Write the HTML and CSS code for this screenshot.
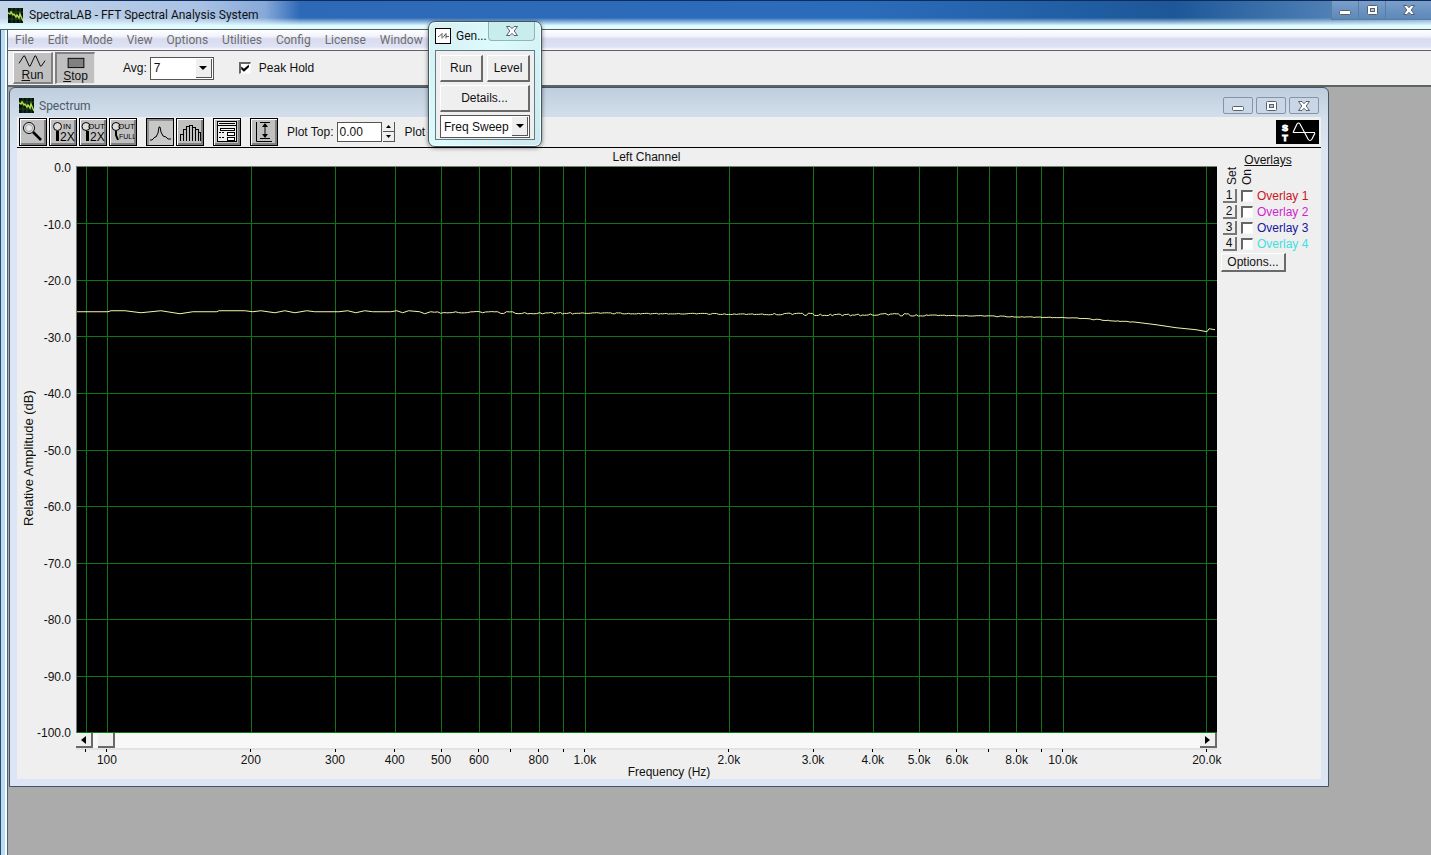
FILE: index.html
```
<!DOCTYPE html>
<html lang="en">
<head>
  <meta charset="UTF-8" />
  <meta name="viewport" content="width=device-width, initial-scale=1.0" />
  <title>SpectraLAB - FFT Spectral Analysis System</title>
  <link rel="stylesheet" href="styles.css">
</head>
<body>
  <svg class="defs" aria-hidden="true">
    <symbol id="app-icon" viewBox="0 0 15 15">
      <rect width="15" height="15" fill="#07140a"/>
      <path d="M4 0V15M8 0V15M12 0V15M0 4H15M0 11H15" stroke="#1c4a20" stroke-width="1"/>
      <path d="M0 5L2 6L3 4L5 7L6 6L8 9L9 7L11 10L12 6L15 13" fill="none" stroke="#b9d94a" stroke-width="1.4"/>
    </symbol>
    <symbol id="win-min" viewBox="0 0 14 12">
      <rect x="1.5" y="6.5" width="11" height="4" rx="1" fill="#fff" stroke="#56616f"/>
    </symbol>
    <symbol id="win-max" viewBox="0 0 14 12">
      <rect x="2.5" y="1.5" width="10" height="9" rx="1" fill="#fff" stroke="#56616f"/>
      <rect x="5.5" y="4.5" width="4" height="3" fill="#b8c6d6" stroke="#56616f"/>
    </symbol>
    <symbol id="win-close" viewBox="0 0 14 12">
      <path d="M1.5 1.5H5L7 3.7L9 1.5H12.5L9.2 6L12.5 10.5H9L7 8.3L5 10.5H1.5L4.8 6Z" fill="#fff" stroke="#56616f"/>
    </symbol>
    <symbol id="arrow-down" viewBox="0 0 8 4"><path d="M0 0H8L4 4Z"/></symbol>
  </svg>

  <div class="app">
    <header class="titlebar">
      <svg class="app-icon"><use href="#app-icon"/></svg>
      <h1 class="title">SpectraLAB - FFT Spectral Analysis System</h1>
      <div class="win-buttons">
        <button aria-label="Minimize"><svg><use href="#win-min"/></svg></button>
        <button aria-label="Maximize"><svg><use href="#win-max"/></svg></button>
        <button class="close" aria-label="Close"><svg><use href="#win-close"/></svg></button>
      </div>
    </header>

    <div class="frame">
      <nav class="menubar">
        <a href="#">File</a>
        <a href="#">Edit</a>
        <a href="#">Mode</a>
        <a href="#">View</a>
        <a href="#">Options</a>
        <a href="#">Utilities</a>
        <a href="#">Config</a>
        <a href="#">License</a>
        <a href="#">Window</a>
      </nav>

      <div class="toolbar">
        <button class="run-btn">
          <svg width="30" height="14" viewBox="0 0 30 14"><path d="M0 9L5 1L6 1L11 12L12 12L17 1L18 1L23 12L24 12L28 6" fill="none" stroke="#000"/></svg>
          <span><u>R</u>un</span>
        </button>
        <button class="run-btn pressed">
          <svg width="30" height="14" viewBox="0 0 30 14"><rect x="6.5" y="2.5" width="17" height="10" fill="#808080" stroke="#000"/></svg>
          <span><u>S</u>top</span>
        </button>
        <label class="avg-label" for="avg">Avg:</label>
        <div class="combo avg">
          <select id="avg"><option>7</option><option>8</option></select>
          <span class="drop"><svg width="8" height="4"><use href="#arrow-down"/></svg></span>
        </div>
        <label class="peak"><input type="checkbox" class="check" checked> Peak Hold</label>
      </div>

      <main class="mdi">
        <section class="child">
          <div class="child-title">
            <svg class="app-icon"><use href="#app-icon"/></svg>
            <h2 class="title">Spectrum</h2>
            <div class="child-buttons">
              <button aria-label="Minimize"><svg><use href="#win-min"/></svg></button>
              <button aria-label="Maximize"><svg><use href="#win-max"/></svg></button>
              <button aria-label="Close"><svg><use href="#win-close"/></svg></button>
            </div>
          </div>

          <div class="child-body">
            <div class="plot-tools">
              <div class="tool-group">
                <button class="tool" aria-label="Zoom">
                  <svg viewBox="0 0 24 24"><circle cx="8" cy="8" r="5.5" fill="#e8e8e8" stroke="#000"/><circle cx="8" cy="8" r="3.5" fill="none" stroke="#999"/><path d="M12 12L20 20" stroke="#000" stroke-width="2.5"/></svg>
                </button>
                <button class="tool" aria-label="Zoom in 2X">
                  <svg viewBox="0 0 24 24"><circle cx="6.5" cy="6.5" r="4" fill="#ddd" stroke="#000"/><path d="M6.5 11V21" stroke="#000" stroke-width="3"/><text x="12" y="9" class="s8">IN</text><text x="9" y="21" class="s12">2X</text></svg>
                </button>
                <button class="tool" aria-label="Zoom out 2X">
                  <svg viewBox="0 0 24 24"><circle cx="5" cy="6.5" r="4" fill="#ddd" stroke="#000"/><path d="M6.5 11V21" stroke="#000" stroke-width="3"/><text x="7" y="9" class="s8">OUT</text><text x="9" y="21" class="s12">2X</text></svg>
                </button>
                <button class="tool" aria-label="Zoom out full">
                  <svg viewBox="0 0 24 24"><circle cx="5" cy="6.5" r="4" fill="#ddd" stroke="#000"/><path d="M5 11V15L7 20" fill="none" stroke="#000" stroke-width="2"/><text x="7" y="9" class="s8">OUT</text><text x="8" y="19" class="s7">FULL</text></svg>
                </button>
              </div>
              <div class="tool-group">
                <button class="tool pressed" aria-label="Line plot">
                  <svg viewBox="0 0 24 24"><path d="M2 20H4L7 17H8L10 13L11 7L12 7L13 12L15 16L18 17L20 19H23" fill="none" stroke="#000"/></svg>
                </button>
                <button class="tool" aria-label="Bar plot">
                  <svg viewBox="0 0 24 24" shape-rendering="crispEdges"><path d="M2.5 21V14.5H5.5V21M5.5 14V9.5H8.5V21M8.5 9V6.5H11.5V21M11.5 5.5H14.5V21M14.5 7.5H17.5V21M17.5 9.5H20.5V21M20.5 12.5H22.5V21M11.5 9V5" fill="none" stroke="#000"/></svg>
                </button>
              </div>
              <div class="tool-group">
                <button class="tool" aria-label="Display settings">
                  <svg viewBox="0 0 24 24" shape-rendering="crispEdges"><rect x="2.5" y="1.5" width="19" height="20" fill="#eee" stroke="#000"/><path d="M4 3.5H20M3 5.5H21" stroke="#000"/><path d="M4 12.5H10M4 17.5H10" stroke="#000" stroke-dasharray="2 1"/><rect x="5.5" y="8.5" width="14" height="2" fill="#fff" stroke="#000"/><rect x="12.5" y="12.5" width="7" height="3" fill="#fff" stroke="#000"/><rect x="12.5" y="17.5" width="7" height="3" fill="#fff" stroke="#000"/></svg>
                </button>
              </div>
              <div class="tool-group">
                <button class="tool" aria-label="Autoscale">
                  <svg viewBox="0 0 24 24"><path d="M4.5 2V21.5H20M8 2.5H18M8 18.5H18M13 5V16" fill="none" stroke="#000"/><path d="M10 7H16L13 3ZM10 14H16L13 18Z"/></svg>
                </button>
              </div>
              <label for="plot-top">Plot Top:</label>
              <input id="plot-top" class="num" type="text" value="0.00">
              <div class="spin">
                <button aria-label="Up"><svg width="5" height="3" viewBox="0 0 5 3"><path d="M0 3H5L2.5 0Z"/></svg></button>
                <button aria-label="Down"><svg width="5" height="3" viewBox="0 0 5 3"><path d="M0 0H5L2.5 3Z"/></svg></button>
              </div>
              <span class="plot-more">Plot</span>
              <svg class="logo" width="43" height="24" viewBox="0 0 43 24">
                <rect width="43" height="24"/>
                <text x="9" y="11" class="logo-text">S</text>
                <text x="9" y="21" class="logo-text">T</text>
                <path d="M17 12.5H39M17 12.5L21 4Q22.5 2 24 4L32 19Q34 22 36 19L39 13" fill="none" stroke="#fff" stroke-width="1.2"/>
              </svg>
            </div>

            <div class="plot-area">
              <div class="y-title">Relative Amplitude (dB)</div>
              <div class="y-axis">
                <span>0.0</span><span>-10.0</span><span>-20.0</span><span>-30.0</span><span>-40.0</span><span>-50.0</span><span>-60.0</span><span>-70.0</span><span>-80.0</span><span>-90.0</span><span>-100.0</span>
              </div>
              <div class="plot-column">
                <h3 class="channel">Left Channel</h3>
                <svg id="plot" class="plot">
                  <g id="grid"></g>
                  <svg width="100%" height="100%" viewBox="0 0 1141 567" preserveAspectRatio="none"><polyline id="trace" class="trace"/></svg>
                </svg>
                <div class="scrollbar">
                  <button aria-label="Scroll left"><svg width="5" height="8" viewBox="0 0 5 8"><path d="M5 0V8L0 4Z"/></svg></button>
                  <span class="thumb"></span>
                  <button class="right" aria-label="Scroll right"><svg width="5" height="8" viewBox="0 0 5 8"><path d="M0 0V8L5 4Z"/></svg></button>
                </div>
                <svg id="x-axis" class="x-axis"></svg>
              </div>
              <aside class="overlays">
                <h3>Overlays</h3>
                <div class="heads"><span>Set</span><span>On</span></div>
                <div class="overlay o1"><button>1</button><input type="checkbox" class="check" id="o1"><label for="o1">Overlay 1</label></div>
                <div class="overlay o2"><button>2</button><input type="checkbox" class="check" id="o2"><label for="o2">Overlay 2</label></div>
                <div class="overlay o3"><button>3</button><input type="checkbox" class="check" id="o3"><label for="o3">Overlay 3</label></div>
                <div class="overlay o4"><button>4</button><input type="checkbox" class="check" id="o4"><label for="o4">Overlay 4</label></div>
                <button class="raised options">Options...</button>
              </aside>
            </div>
            <div class="x-title">Frequency (Hz)</div>
          </div>
        </section>
      </main>
    </div>
  </div>

  <div class="generator" role="dialog" aria-label="Generator">
    <div class="gen-title">
      <svg width="16" height="16" viewBox="0 0 16 16"><rect x=".5" y=".5" width="15" height="15" fill="#fff" stroke="#000"/><path d="M3 8.5H4L7 5.5V10.5M8 9.5L11 5.5V10.5M11 8.5H14" fill="none" stroke="#555"/></svg>
      <span>Gen...</span>
      <button aria-label="Close"><svg><use href="#win-close"/></svg></button>
    </div>
    <div class="gen-body">
      <div class="gen-row">
        <button class="raised">Run</button>
        <button class="raised">Level</button>
      </div>
      <button class="raised">Details...</button>
      <div class="combo">
        <select aria-label="Signal"><option>Freq Sweep</option><option>Pink Noise</option></select>
        <span class="drop"><svg width="8" height="4"><use href="#arrow-down"/></svg></span>
      </div>
    </div>
  </div>

  <script src="script.js"></script>
</body>
</html>
```
FILE: styles.css
```
* {
  margin: 0;
  padding: 0;
  box-sizing: border-box;
}

body {
  height: 100vh;
  overflow: hidden;
  font-family: "Liberation Sans", Arial, sans-serif;
  font-size: 12px;
  line-height: 14px;
  color: #111;
  background: #ababab;
}

button, input, select {
  font: inherit;
  color: inherit;
  border-radius: 0;
}

button {
  border: none;
  background: #efefef;
}

svg {
  display: block;
}

.defs {
  position: absolute;
  width: 0;
  height: 0;
}

.app {
  display: flex;
  flex-direction: column;
  height: 100%;
}

/* main window */
.titlebar {
  display: flex;
  align-items: flex-start;
  height: 30px;
  padding-left: 8px;
  border-top: 1px solid #0d2c5c;
  border-bottom: 1px solid #51605f;
  background:
    linear-gradient(to bottom, rgba(220, 250, 255, 0) 60%, #e2fbff 88%),
    linear-gradient(to right, #c3d5e8 0, #a9c2e4 200px, #86a9d9 265px, #2e69b7 300px, #2b6cba 60%, #1d5799 82%, #4a7cb2 92%, #7c9fca 100%);
}

.app-icon {
  width: 15px;
  height: 15px;
}

.titlebar .app-icon {
  margin-top: 7px;
}

.title {
  font-family: Roboto, sans-serif;
  font-size: 12px;
  font-weight: 400;
  line-height: 16px;
}

.titlebar .title {
  margin: 6px 0 0 6px;
}

.win-buttons {
  display: flex;
  margin-left: auto;
}

.win-buttons button {
  display: flex;
  align-items: center;
  justify-content: center;
  width: 27px;
  height: 19px;
  border: solid #5b7ca3;
  border-width: 0 0 1px 1px;
  background: linear-gradient(#7b9fca, #5c88b9);
}

.win-buttons .close {
  width: 46px;
}

.win-buttons svg, .child-buttons svg, .gen-title button svg {
  width: 14px;
  height: 12px;
}

.frame {
  flex: 1;
  display: flex;
  flex-direction: column;
  min-height: 0;
  border-left: 1px solid #4c5f73;
  margin-left: 7px;
  box-shadow: -2px 0 0 #f6fdff, -6px 0 0 #b9dcf5, -7px 0 0 #2d4963;
}

.menubar {
  display: flex;
  gap: 14px;
  height: 21px;
  padding: 1px 7px 0;
  border-bottom: 1px solid #5c6062;
  background: linear-gradient(#fff 0, #f3f4fb 30%, #d9dcf0 45%, #dfe2f4 85%, #fff 100%);
}

.menubar a {
  font-family: Roboto, sans-serif;
  font-size: 12px;
  line-height: 18px;
  color: #6d6d6d;
  text-decoration: none;
}

.toolbar {
  display: flex;
  align-items: center;
  height: 36px;
  padding: 0 5px;
  border-bottom: 2px solid #5d6561;
  background: #efefef;
}

.run-btn {
  display: flex;
  flex-direction: column;
  align-items: center;
  width: 40px;
  height: 32px;
  margin-right: 2px;
  padding-top: 2px;
  background: #c0c0c0;
  border: 1px solid #fff;
  border-right: 2px solid #808080;
  border-bottom: 2px solid #808080;
}

.run-btn.pressed {
  border: 1px solid #e8e8e8;
  border-top: 2px solid #808080;
  border-left: 2px solid #808080;
}

.avg-label {
  margin: 0 3px 0 26px;
}

.combo {
  position: relative;
  height: 23px;
  border: 1px solid #555;
  background: #fff;
}

.combo select {
  width: 100%;
  height: 100%;
  padding: 0 16px 0 3px;
  border: none;
  background: transparent;
  appearance: none;
}

.combo .drop {
  position: absolute;
  top: 1px;
  right: 1px;
  bottom: 1px;
  display: flex;
  align-items: center;
  justify-content: center;
  width: 16px;
  background: #efefef;
  border-right: 1px solid #555;
  border-bottom: 1px solid #555;
  pointer-events: none;
}

.avg {
  width: 64px;
}

.peak {
  display: flex;
  align-items: center;
  gap: 8px;
  margin-left: 25px;
}

.check {
  width: 12px;
  height: 12px;
  appearance: none;
  background: #fff;
  border: 1px solid #f8f8f8;
  border-top: 2px solid #666;
  border-left: 2px solid #666;
}

.check:checked::before {
  content: "";
  display: block;
  width: 9px;
  height: 8px;
  background: #000;
  clip-path: polygon(5% 30%, 35% 60%, 90% 5%, 90% 40%, 35% 98%, 5% 65%);
}

/* spectrum window */
.mdi {
  flex: 1;
  display: flex;
  min-height: 0;
  padding: 0 102px 68px 1px;
  background: #ababab;
}

.child {
  flex: 1;
  display: flex;
  flex-direction: column;
  min-width: 0;
  padding: 0 7px 7px;
  border: 1px solid #44546a;
  border-radius: 6px 6px 0 0;
  background: linear-gradient(#bfcddd 0, #d3dfeb 30px, #dbe5f3 60px);
}

.child-title {
  display: flex;
  align-items: center;
  height: 29px;
  padding: 6px 2px 0;
}

.child-title .title {
  margin-left: 5px;
  color: #4b5a66;
}

.child-buttons {
  display: flex;
  gap: 3px;
  margin-left: auto;
}

.child-buttons button {
  display: flex;
  align-items: center;
  justify-content: center;
  width: 30px;
  height: 17px;
  border: 1px solid #8794a8;
  border-radius: 2px;
  background: #c9d6e5;
}

.child-body {
  flex: 1;
  display: flex;
  flex-direction: column;
  min-height: 0;
  background: #efefef;
}

.plot-tools {
  display: flex;
  align-items: center;
  height: 31px;
  padding: 0 2px;
  border-bottom: 1px solid #000;
}

.tool-group {
  display: flex;
  gap: 2px;
  margin-right: 9px;
}

.tool {
  width: 28px;
  height: 28px;
  border: 1px solid #000;
  background: #c0c0c0;
  box-shadow: inset 1px 1px 0 #fff, inset -2px -2px 0 #808080;
}

.tool.pressed {
  background: #c8c8c8;
  box-shadow: inset 2px 2px 0 #909090;
}

.tool svg {
  width: 24px;
  height: 24px;
  margin: 1px;
}

.s7 { font-size: 7px; }
.s8 { font-size: 8px; }
.s12 { font-size: 12px; }

.num {
  width: 45px;
  height: 20px;
  margin: 0 1px 0 4px;
  padding: 0 1px;
  border: 1px solid #555;
  background: #fff;
}

.spin {
  display: flex;
  flex-direction: column;
  width: 12px;
  height: 20px;
}

.spin button {
  display: flex;
  flex: 1;
  align-items: center;
  justify-content: center;
  border-right: 1px solid #555;
  border-bottom: 1px solid #555;
}

.plot-more {
  margin-left: 9px;
}

.logo {
  margin-left: auto;
}

.logo-text {
  font-size: 9px;
  font-weight: 700;
  text-anchor: middle;
  fill: #fff;
  stroke: #fff;
}

.plot-area {
  flex: 1;
  display: flex;
  min-height: 0;
}

.y-title {
  width: 24px;
  padding-bottom: 4px;
  font-size: 13px;
  line-height: 24px;
  text-align: center;
  writing-mode: vertical-rl;
  transform: rotate(180deg);
}

.y-axis {
  display: flex;
  flex-direction: column;
  align-items: flex-end;
  justify-content: space-between;
  width: 35px;
  padding: 13px 5px 25px 0;
}

.plot-column {
  flex: 1;
  display: flex;
  flex-direction: column;
  min-width: 0;
}

.channel {
  height: 18px;
  font-size: 12px;
  font-weight: 400;
  line-height: 18px;
  text-align: center;
}

.plot {
  flex: 1;
  width: 100%;
  min-height: 0;
  background: #000;
  border-top: 1px solid #6d856d;
  border-left: 1px solid #777;
}

.plot line {
  stroke: #0e7414;
  shape-rendering: crispEdges;
}

.trace {
  fill: none;
  stroke: #f6f6a8;
  shape-rendering: crispEdges;
  vector-effect: non-scaling-stroke;
}

.scrollbar {
  display: flex;
  height: 17px;
  background: #f8f8f8;
  border-bottom: 2px solid #e3e3e3;
}

.scrollbar button, .thumb {
  display: flex;
  align-items: center;
  justify-content: center;
  width: 17px;
  height: 15px;
  background: #efefef;
  border: solid #6a6a6a;
  border-width: 0 2px 2px 0;
}

.scrollbar .thumb {
  margin-left: 5px;
}

.scrollbar .right {
  margin-left: auto;
}

.x-axis {
  width: 100%;
  height: 15px;
  overflow: visible;
}

.x-axis line {
  stroke: #000;
  shape-rendering: crispEdges;
}

.x-axis text {
  text-anchor: middle;
  fill: #111;
}

.x-title {
  height: 14px;
  text-align: center;
}

.overlays {
  width: 104px;
  padding: 5px 0 0 4px;
}

.overlays h3 {
  width: 94px;
  font-size: 12px;
  font-weight: 400;
  text-align: center;
  text-decoration: underline;
}

.heads {
  display: flex;
  gap: 1px;
  padding: 0 0 3px 4px;
}

.heads span {
  width: 14px;
  height: 18px;
  writing-mode: vertical-rl;
  transform: rotate(180deg);
}

.overlay {
  display: flex;
  align-items: center;
  gap: 4px;
  height: 16px;
  padding-left: 2px;
}

.overlay button {
  width: 14px;
  height: 14px;
  line-height: 12px;
  border: solid #777;
  border-width: 0 2px 2px 0;
}

.o1 label { color: #c8141e; }
.o2 label { color: #cf1fcf; }
.o3 label { color: #1616a0; }
.o4 label { color: #3fe0e0; }

.raised {
  height: 27px;
  border: 1px solid #fff;
  border-right: 2px solid #6a6a6a;
  border-bottom: 2px solid #6a6a6a;
}

.options {
  width: 65px;
  height: 19px;
  margin-top: 1px;
}

/* generator floats over both windows */
.generator {
  position: absolute;
  top: 21px;
  left: 428px;
  width: 114px;
  padding: 0 6px 6px;
  border: 1px solid #3d5961;
  border-radius: 7px;
  background: linear-gradient(120deg, #d5eef2, #ddfbfd 45%, #cbe9ee);
  box-shadow: 0 1px 4px rgba(0, 0, 0, 0.5), inset 0 0 0 1px #f2ffff;
}

.gen-title {
  display: flex;
  align-items: center;
  height: 28px;
  font-family: Roboto, sans-serif;
}

.gen-title span {
  margin-left: 5px;
}

.gen-title button {
  display: flex;
  align-items: center;
  justify-content: center;
  align-self: flex-start;
  width: 47px;
  height: 19px;
  margin-left: auto;
  border: 1px solid #93b3b8;
  border-top: none;
  border-radius: 0 0 4px 4px;
  background: #c9eced;
}

.gen-body {
  display: flex;
  flex-direction: column;
  gap: 3px;
  padding: 4px 4px 1px;
  border: 1px solid #5f7a80;
  background: #efefef;
}

.gen-row {
  display: flex;
  justify-content: space-between;
}

.gen-row .raised {
  width: 43px;
}
```
FILE: script.js
```
const NS = "http://www.w3.org/2000/svg";
const grid = document.getElementById("grid");
const axis = document.getElementById("x-axis");

// log scale, 86 Hz at the left edge and 21 kHz at the right
const LOW = Math.log10(86.15);
const SPAN = 1141 / 478;

function add(parent, name, attrs) {
  const el = document.createElementNS(NS, name);
  for (const key in attrs) el.setAttribute(key, attrs[key]);
  parent.appendChild(el);
  return el;
}

const labels = {
  100: "100", 200: "200", 300: "300", 400: "400", 500: "500", 600: "600", 800: "800",
  1000: "1.0k", 2000: "2.0k", 3000: "3.0k", 4000: "4.0k", 5000: "5.0k", 6000: "6.0k",
  8000: "8.0k", 10000: "10.0k", 20000: "20.0k"
};
const freqs = [90, 100, 200, 300, 400, 500, 600, 700, 800, 900, 1000, 2000, 3000,
  4000, 5000, 6000, 7000, 8000, 9000, 10000, 20000];

freqs.forEach(f => {
  const x = (Math.log10(f) - LOW) / SPAN * 100 + "%";
  add(grid, "line", { x1: x, x2: x, y1: 0, y2: "100%" });
  add(axis, "line", { x1: x, x2: x, y1: -1, y2: 2 });
  if (labels[f]) add(axis, "text", { x: x, y: 14 }).textContent = labels[f];
});

for (let i = 1; i <= 10; i++) {
  const y = i === 10 ? "99.9%" : i * 10 + "%";
  add(grid, "line", { x1: 0, x2: "100%", y1: y, y2: y });
}

// measured response, x / y in plot units
const points = [
  [0, 145], [31, 145], [34, 144], [48, 144], [64, 146], [84, 144], [103, 147], [116, 145],
  [140, 145], [142, 144], [168, 144], [176, 145], [184, 144], [198, 146], [208, 144],
  [218, 146], [230, 144], [238, 145], [262, 145], [271, 144], [279, 146], [288, 144],
  [296, 145], [314, 145], [320, 144], [326, 146], [332, 144], [343, 145], [348, 147], [354, 145]
];
const noise = [0, 0.9, -0.7, 0.3, 1, -0.9, 0.2, -0.4, 0.8, -1, 0.5, 0, 0.7, -0.6, 1, -0.2, -0.8, 0.4];
for (let x = 358, i = 0; x < 1060; x += x < 470 ? 3 : 2, i++) {
  const base = x < 600 ? 145.5 + (x - 358) * 0.006
    : 147 + (x - 600) * 0.005 + Math.max(0, x - 850) * 0.014 + Math.max(0, x - 990) * 0.045;
  const wobble = x < 500 ? 1 : x < 690 ? 0.5 : x < 850 ? 1.2 : 0.4;
  points.push([x, base + wobble * noise[(i * 7 + (i >> 3)) % noise.length]]);
}
points.push([1064, 156], [1080, 158], [1100, 161], [1120, 163], [1131, 165], [1133, 162], [1139, 163]);
document.getElementById("trace").setAttribute("points", points.map(p => p.join(",")).join(" "));
```
